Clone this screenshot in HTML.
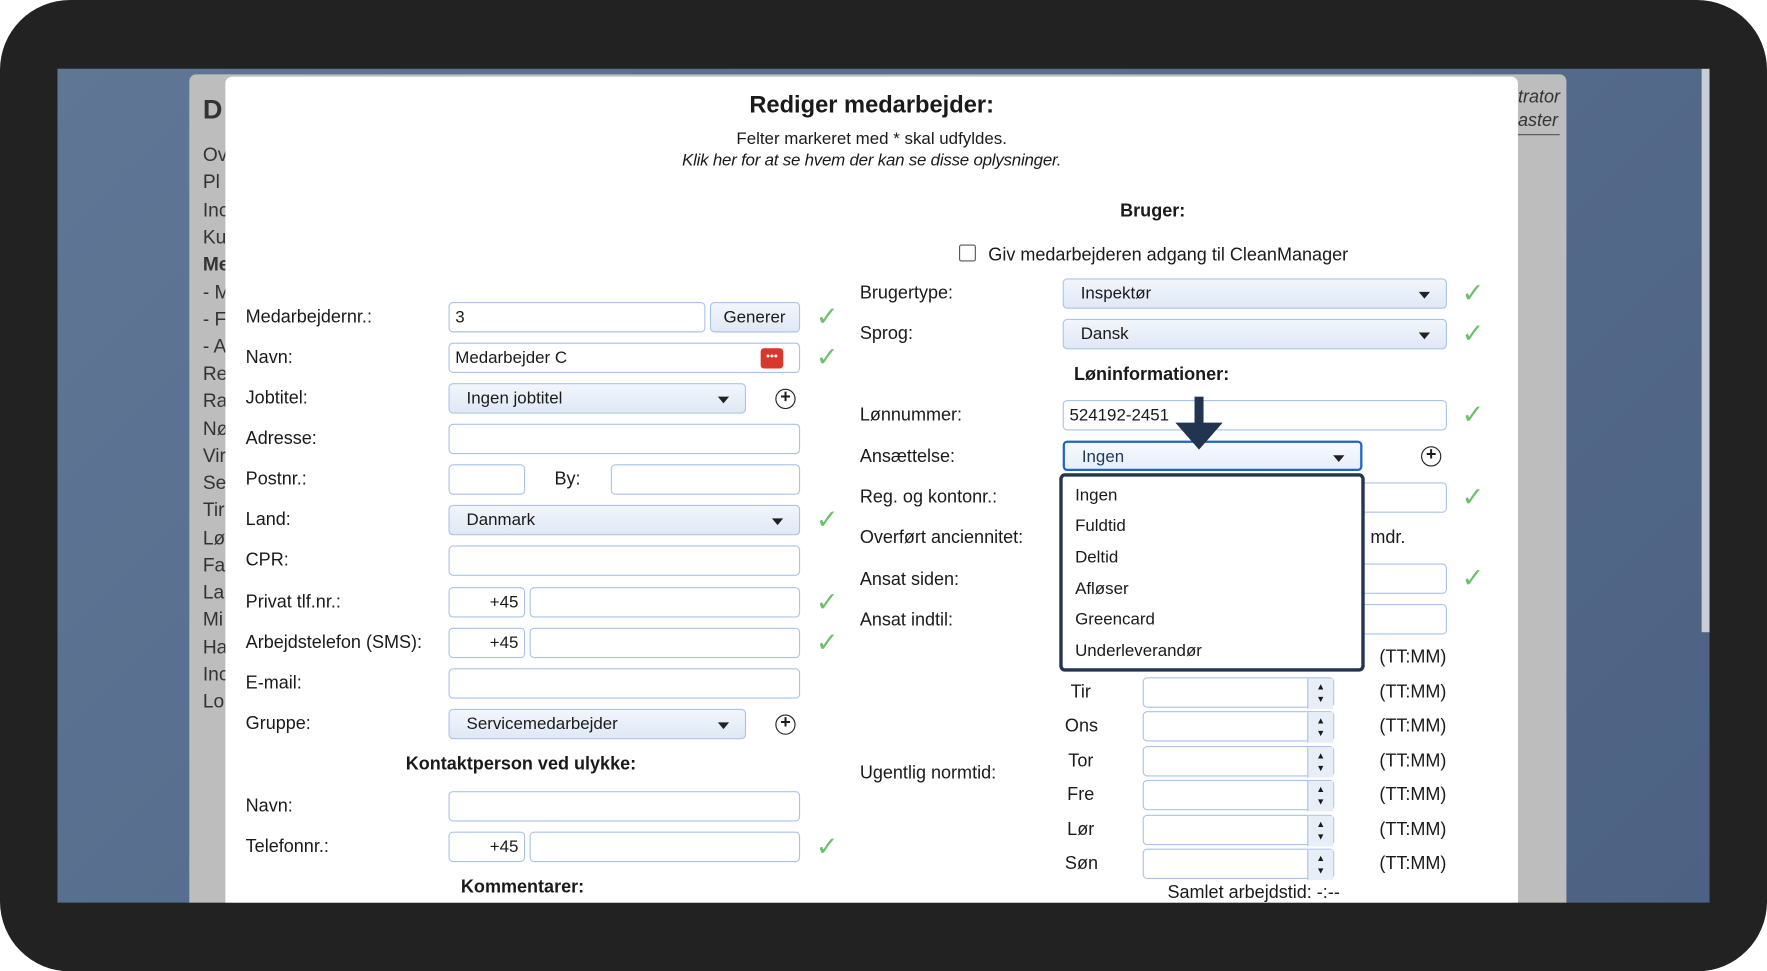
<!DOCTYPE html>
<html><head><meta charset="utf-8"><style>
*{box-sizing:border-box;margin:0;padding:0}
body{width:1767px;height:971px;overflow:hidden;background:#fff;font-family:"Liberation Sans",sans-serif;color:#1a1a1a}
#w{position:absolute;left:0;top:0;width:1568px;height:862px;transform:scale(1.12691);transform-origin:0 0}
.frame{position:absolute;left:0;top:0;width:1568px;height:862px;background:#222;border-radius:62px}
.screen{position:absolute;left:51px;top:61px;width:1466px;height:740px;background:linear-gradient(135deg,#5f7695,#4d6283);overflow:hidden}
.gray{position:absolute;left:117px;top:5px;width:1222px;height:740px;background:#bdbdbd;border-radius:6px 6px 0 0}
.modal{position:absolute;left:149px;top:7px;width:1147px;height:740px;background:#fff;border-radius:6px 6px 0 0}
.a{position:absolute;white-space:nowrap;font-size:16px}
.in{position:absolute;height:27px;border:1px solid #aac3e6;border-radius:4px;background:#fff;font-size:15px;padding:4px 5px}
.sel{position:absolute;height:27px;border:1px solid #aac3e6;border-radius:4px;background:linear-gradient(#f2f6fc,#dfe8f5);font-size:15px;padding:4px 15px}
.sel:after{content:"";position:absolute;right:14px;top:11px;border:5px solid transparent;border-top:6px solid #222;border-bottom:0}
.sel.nog:after{display:none}
.ck{position:absolute;color:#6cc06c;font-size:24px;line-height:24px}
.plus{position:absolute;width:18px;height:18px;border:1.5px solid #222;border-radius:50%;font-size:16px;line-height:14px;text-align:center;font-weight:bold}
.sp{position:absolute;height:27px;width:170px;border:1px solid #aac3e6;border-radius:4px;background:#fff}
.sp:after{content:"▲\A▼";white-space:pre;position:absolute;right:0;top:0;width:22px;height:25px;background:#e8eef7;border-left:1px solid #aac3e6;font-size:8px;line-height:11px;text-align:center;padding-top:2px}
.side{position:absolute;left:180px;font-size:17px;color:#333}
</style></head><body><div id="w">
<div class="frame"></div>
<div class="screen">
<div style="position:absolute;left:1459px;top:0;width:7px;height:500px;background:#c9ced6"></div>
<div class="gray"></div>
</div>
<div class="a" style="left:1347px;top:78px;font-style:italic;color:#333">trator</div>
<div class="a" style="left:1347px;top:99px;font-style:italic;color:#333">aster</div>
<div style="position:absolute;left:1347px;top:119px;width:37px;height:1px;background:#555"></div>
<div class="a" style="left:180px;top:84px;font-size:24px;font-weight:bold;color:#333">D</div>
<div class="side" style="top:128px">Ov</div><div class="side" style="top:152px">Pl</div><div class="side" style="top:177px">Inc</div><div class="side" style="top:201px">Ku</div><div class="side" style="top:225px;font-weight:bold">Me</div><div class="side" style="top:250px">- M</div><div class="side" style="top:274px">- F</div><div class="side" style="top:298px">- A</div><div class="side" style="top:322px">Re</div><div class="side" style="top:346px">Ra</div><div class="side" style="top:371px">Nø</div><div class="side" style="top:395px">Vir</div><div class="side" style="top:419px">Se</div><div class="side" style="top:443px">Tir</div><div class="side" style="top:468px">Lø</div><div class="side" style="top:492px">Fa</div><div class="side" style="top:516px">La</div><div class="side" style="top:540px">Mi</div><div class="side" style="top:565px">Ha</div><div class="side" style="top:589px">Inc</div><div class="side" style="top:613px">Lo</div>
<div style="position:absolute;left:51px;top:61px;width:1466px;height:740px;overflow:hidden"><div class="modal"></div></div>

<div class="a" style="left:0;width:1547px;text-align:center;top:82px;font-size:21px;font-weight:bold">Rediger medarbejder:</div>
<div class="a" style="left:0;width:1547px;text-align:center;top:115px;font-size:15px">Felter markeret med * skal udfyldes.</div>
<div class="a" style="left:0;width:1547px;text-align:center;top:134px;font-size:15px;font-style:italic;letter-spacing:-0.2px">Klik her for at se hvem der kan se disse oplysninger.</div>

<div class="a" style="left:218px;top:273px">Medarbejdernr.:</div>
<div class="in" style="left:398px;top:268px;width:228px">3</div>
<div class="sel nog" style="left:630px;top:268px;width:80px;padding:4px 11px">Generer</div>
<div class="ck" style="left:724px;top:270px">✓</div>
<div class="a" style="left:218px;top:309px">Navn:</div>
<div class="in" style="left:398px;top:304px;width:312px">Medarbejder C<span style="position:absolute;right:14px;top:4px;width:20px;height:18px;background:#d9372c;border-radius:3px;color:#fff;font-size:10px;text-align:center;line-height:16px">•••</span></div>
<div class="ck" style="left:724px;top:306px">✓</div>
<div class="a" style="left:218px;top:345px">Jobtitel:</div>
<div class="sel" style="left:398px;top:340px;width:264px">Ingen jobtitel</div>
<div class="plus" style="left:688px;top:345px">+</div>
<div class="a" style="left:218px;top:381px">Adresse:</div>
<div class="in" style="left:398px;top:376px;width:312px"></div>
<div class="a" style="left:218px;top:417px">Postnr.:</div>
<div class="in" style="left:398px;top:412px;width:68px"></div>
<div class="a" style="left:492px;top:417px">By:</div>
<div class="in" style="left:542px;top:412px;width:168px"></div>
<div class="a" style="left:218px;top:453px">Land:</div>
<div class="sel" style="left:398px;top:448px;width:312px">Danmark</div>
<div class="ck" style="left:724px;top:450px">✓</div>
<div class="a" style="left:218px;top:489px">CPR:</div>
<div class="in" style="left:398px;top:484px;width:312px"></div>
<div class="a" style="left:218px;top:526px">Privat tlf.nr.:</div>
<div class="in" style="left:398px;top:521px;width:68px;text-align:right">+45</div>
<div class="in" style="left:470px;top:521px;width:240px"></div>
<div class="ck" style="left:724px;top:523px">✓</div>
<div class="a" style="left:218px;top:562px">Arbejdstelefon (SMS):</div>
<div class="in" style="left:398px;top:557px;width:68px;text-align:right">+45</div>
<div class="in" style="left:470px;top:557px;width:240px"></div>
<div class="ck" style="left:724px;top:559px">✓</div>
<div class="a" style="left:218px;top:598px">E-mail:</div>
<div class="in" style="left:398px;top:593px;width:312px"></div>
<div class="a" style="left:218px;top:634px">Gruppe:</div>
<div class="sel" style="left:398px;top:629px;width:264px">Servicemedarbejder</div>
<div class="plus" style="left:688px;top:634px">+</div>
<div class="a" style="left:360px;top:670px;font-weight:bold">Kontaktperson ved ulykke:</div>
<div class="a" style="left:218px;top:707px">Navn:</div>
<div class="in" style="left:398px;top:702px;width:312px"></div>
<div class="a" style="left:218px;top:743px">Telefonnr.:</div>
<div class="in" style="left:398px;top:738px;width:68px;text-align:right">+45</div>
<div class="in" style="left:470px;top:738px;width:240px"></div>
<div class="ck" style="left:724px;top:740px">✓</div>
<div class="a" style="left:409px;top:779px;font-weight:bold">Kommentarer:</div>

<div class="a" style="left:994px;top:179px;font-weight:bold">Bruger:</div>
<div style="position:absolute;left:851px;top:217px;width:15px;height:15px;border:1px solid #555;border-radius:2px;background:#fff"></div>
<div class="a" style="left:877px;top:218px">Giv medarbejderen adgang til CleanManager</div>
<div class="a" style="left:763px;top:252px">Brugertype:</div>
<div class="sel" style="left:943px;top:247px;width:341px">Inspektør</div>
<div class="ck" style="left:1297px;top:249px">✓</div>
<div class="a" style="left:763px;top:288px">Sprog:</div>
<div class="sel" style="left:943px;top:283px;width:341px">Dansk</div>
<div class="ck" style="left:1297px;top:285px">✓</div>
<div class="a" style="left:953px;top:324px;font-weight:bold">Løninformationer:</div>
<div class="a" style="left:763px;top:360px">Lønnummer:</div>
<div class="in" style="left:943px;top:355px;width:341px">524192-2451</div>
<div class="ck" style="left:1297px;top:357px">✓</div>
<div class="a" style="left:763px;top:397px">Ansættelse:</div>
<div class="sel" style="left:943px;top:391px;width:266px;border:2px solid #1f63c7;background:linear-gradient(#f7faff,#e6eefa);color:#1f3a5c">Ingen</div>
<div class="plus" style="left:1261px;top:396px">+</div>
<div class="a" style="left:763px;top:433px">Reg. og kontonr.:</div>
<div class="in" style="left:1200px;top:428px;width:84px"></div>
<div class="ck" style="left:1297px;top:430px">✓</div>
<div class="a" style="left:763px;top:469px">Overført anciennitet:</div>
<div class="a" style="left:1216px;top:469px">mdr.</div>
<div class="a" style="left:763px;top:506px">Ansat siden:</div>
<div class="in" style="left:1200px;top:500px;width:84px"></div>
<div class="ck" style="left:1297px;top:502px">✓</div>
<div class="a" style="left:763px;top:542px">Ansat indtil:</div>
<div class="in" style="left:1200px;top:536px;width:84px"></div>
<div class="a" style="left:1224px;top:575px">(TT:MM)</div>
<div class="a" style="left:950px;top:606px">Tir</div><div class="sp" style="left:1014px;top:601px"></div><div class="a" style="left:1224px;top:606px">(TT:MM)</div>
<div class="a" style="left:945px;top:636px">Ons</div><div class="sp" style="left:1014px;top:631px"></div><div class="a" style="left:1224px;top:636px">(TT:MM)</div>
<div class="a" style="left:948px;top:667px">Tor</div><div class="sp" style="left:1014px;top:662px"></div><div class="a" style="left:1224px;top:667px">(TT:MM)</div>
<div class="a" style="left:763px;top:678px">Ugentlig normtid:</div>
<div class="a" style="left:947px;top:697px">Fre</div><div class="sp" style="left:1014px;top:692px"></div><div class="a" style="left:1224px;top:697px">(TT:MM)</div>
<div class="a" style="left:947px;top:728px">Lør</div><div class="sp" style="left:1014px;top:723px"></div><div class="a" style="left:1224px;top:728px">(TT:MM)</div>
<div class="a" style="left:945px;top:758px">Søn</div><div class="sp" style="left:1014px;top:753px"></div><div class="a" style="left:1224px;top:758px">(TT:MM)</div>
<div class="a" style="left:1036px;top:784px">Samlet arbejdstid: -:--</div>
<div style="position:absolute;left:940px;top:420px;width:271px;height:176px;border:3px solid #22344f;border-radius:5px;background:#fff;font-size:15px">
<div class="a" style="left:11px;top:8px;font-size:15px">Ingen</div>
<div class="a" style="left:11px;top:35px;font-size:15px">Fuldtid</div>
<div class="a" style="left:11px;top:63px;font-size:15px">Deltid</div>
<div class="a" style="left:11px;top:91px;font-size:15px">Afløser</div>
<div class="a" style="left:11px;top:118px;font-size:15px">Greencard</div>
<div class="a" style="left:11px;top:146px;font-size:15px">Underleverandør</div>
</div>
<div style="position:absolute;left:1060px;top:352px;width:8px;height:24px;background:#22344f"></div>
<div style="position:absolute;left:1043px;top:375px;width:0;height:0;border-left:21px solid transparent;border-right:21px solid transparent;border-top:24px solid #22344f"></div>
</div></body></html>
